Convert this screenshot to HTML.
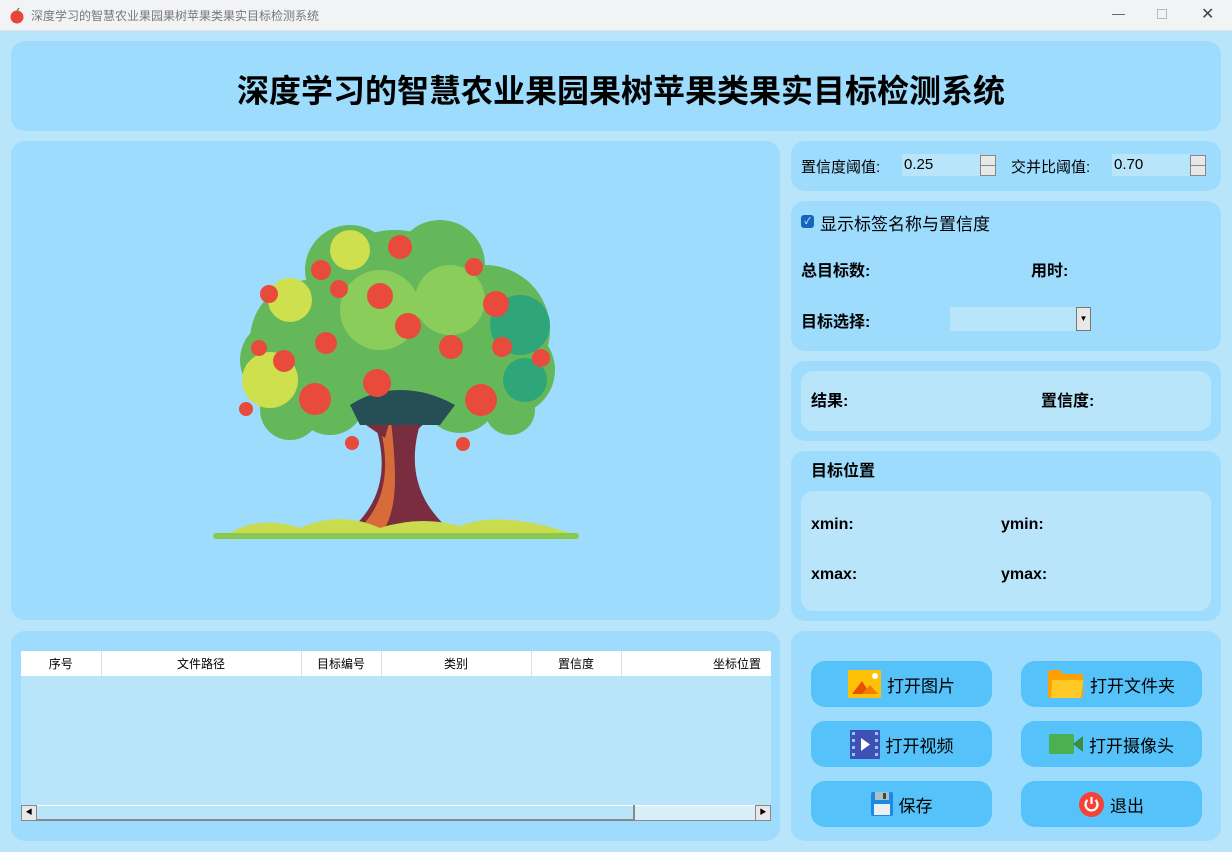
<!DOCTYPE html>
<html><head><meta charset="utf-8"><style>
*{margin:0;padding:0;box-sizing:border-box}
body{width:1232px;height:852px;overflow:hidden;background:#b9e5fb;font-family:"Liberation Sans","Noto Sans CJK SC",sans-serif;position:relative;color:#000}
.abs{position:absolute}
.tb{left:0;top:0;width:1232px;height:31px;background:#f2f3f5;border-bottom:1px solid #e2e6ea}
.p{position:absolute;background:#9ddcfc;border-radius:14px}
.in{position:absolute;background:#b9e5fb;border-radius:12px}
.b{font-weight:bold;font-size:16px}
.btn{position:absolute;width:181px;height:46px;background:#55c2f9;border-radius:14px;display:flex;align-items:center;justify-content:center;font-size:17px;gap:6px}
.spin{position:absolute;width:16px;height:21px;background:#e8e8e8;border:1px solid #888}
.spin:after{content:"";position:absolute;left:0;right:0;top:9px;border-top:1px solid #888}
th{font-weight:normal;font-size:12px;height:25px;border-right:1px solid #dde;background:#fff}
</style></head><body>
<div class="abs tb">
 <svg class="abs" style="left:9px;top:7px" width="16" height="17"><circle cx="8" cy="10" r="6.5" fill="#e8453c"/><path d="M8 4 L10 1" stroke="#4a4" stroke-width="1.5"/></svg>
 <div class="abs" style="left:31px;top:7px;font-size:12px;color:#777">深度学习的智慧农业果园果树苹果类果实目标检测系统</div>
 <div class="abs" style="left:1112px;top:6px;font-size:13px;color:#555">—</div>
 <div class="abs" style="left:1157px;top:9px;width:10px;height:10px;border:1px solid #bbb"></div>
 <div class="abs" style="left:1201px;top:4px;font-size:16px;color:#444">✕</div>
</div>
<div class="p" style="left:11px;top:41px;width:1210px;height:90px"></div>
<div class="abs" style="left:0;top:66px;width:1242px;text-align:center;font-size:32px;font-weight:bold">深度学习的智慧农业果园果树苹果类果实目标检测系统</div>

<div class="p" style="left:11px;top:141px;width:769px;height:479px"></div>
<svg class="abs" style="left:200px;top:210px" width="390" height="340" viewBox="0 0 390 340">
 <path d="M170 200 C190 250 185 290 150 320 L250 320 C215 290 205 250 225 200 Z" fill="#7a2d3e"/>
 <path d="M175 200 C192 250 188 290 160 318 L185 318 C200 290 195 250 190 200Z" fill="#d86b3a"/>
 <path d="M200 210 L260 160 L270 170 L212 225Z M190 210 L120 170 L115 180 L185 228Z" fill="#7a2d3e"/>
 <g fill="#64b85a">
  <circle cx="195" cy="110" r="90"/><circle cx="110" cy="130" r="60"/><circle cx="285" cy="120" r="65"/>
  <circle cx="80" cy="150" r="40"/><circle cx="310" cy="160" r="45"/><circle cx="150" cy="60" r="45"/><circle cx="240" cy="55" r="45"/>
  <circle cx="130" cy="190" r="35"/><circle cx="260" cy="185" r="38"/><circle cx="90" cy="200" r="30"/><circle cx="310" cy="200" r="25"/>
 </g>
 <g fill="#cfe04e"><circle cx="70" cy="170" r="28"/><circle cx="150" cy="40" r="20"/><circle cx="90" cy="90" r="22"/></g>
 <g fill="#2fa57a"><circle cx="320" cy="115" r="30"/><circle cx="325" cy="170" r="22"/></g>
 <g fill="#8acd5a"><circle cx="180" cy="100" r="40"/><circle cx="250" cy="90" r="35"/></g>
 <path d="M150 195 C180 175 220 175 255 195 L240 215 L160 215Z" fill="#264f55"/>
 <g fill="#e84b3c">
  <circle cx="200" cy="37" r="12"/><circle cx="121" cy="60" r="10"/><circle cx="274" cy="57" r="9"/><circle cx="69" cy="84" r="9"/>
  <circle cx="139" cy="79" r="9"/><circle cx="180" cy="86" r="13"/><circle cx="296" cy="94" r="13"/><circle cx="208" cy="116" r="13"/>
  <circle cx="126" cy="133" r="11"/><circle cx="251" cy="137" r="12"/><circle cx="59" cy="138" r="8"/><circle cx="84" cy="151" r="11"/>
  <circle cx="302" cy="137" r="10"/><circle cx="341" cy="148" r="9"/><circle cx="177" cy="173" r="14"/><circle cx="115" cy="189" r="16"/>
  <circle cx="281" cy="190" r="16"/><circle cx="46" cy="199" r="7"/><circle cx="152" cy="233" r="7"/><circle cx="263" cy="234" r="7"/>
 </g>
 <rect x="13" y="323" width="366" height="6" rx="3" fill="#8ac850"/>
 <path d="M30 323 Q60 305 100 318 Q140 300 180 318 Q220 305 260 316 Q300 300 370 323Z" fill="#c9dc50"/>
</svg>

<div class="p" style="left:791px;top:141px;width:430px;height:50px"></div>
<div class="abs" style="left:801px;top:156px;font-size:15px">置信度阈值:</div>
<div class="abs" style="left:902px;top:154px;width:78px;height:22px;background:#b9e5fb;font-size:15px;padding:2px 2px">0.25</div>
<div class="spin" style="left:980px;top:155px"></div>
<div class="abs" style="left:1011px;top:156px;font-size:15px">交并比阈值:</div>
<div class="abs" style="left:1112px;top:154px;width:78px;height:22px;background:#b9e5fb;font-size:15px;padding:2px 2px">0.70</div>
<div class="spin" style="left:1190px;top:155px"></div>

<div class="p" style="left:791px;top:201px;width:430px;height:150px"></div>
<div class="abs" style="left:801px;top:215px;width:13px;height:13px;background:#1565c0;border-radius:3px;color:#fff;font-size:9px;text-align:center;line-height:13px">✓</div>
<div class="abs" style="left:820px;top:210px;font-size:17px">显示标签名称与置信度</div>
<div class="abs b" style="left:801px;top:257px">总目标数:</div>
<div class="abs b" style="left:1031px;top:257px">用时:</div>
<div class="abs b" style="left:801px;top:308px">目标选择:</div>
<div class="abs" style="left:950px;top:307px;width:126px;height:24px;background:#b9e5fb"></div>
<div class="abs" style="left:1076px;top:307px;width:15px;height:24px;background:#e8e8e8;border:1px solid #777;font-size:8px;text-align:center;line-height:22px">▼</div>

<div class="p" style="left:791px;top:361px;width:430px;height:80px"></div>
<div class="in" style="left:801px;top:371px;width:410px;height:60px"></div>
<div class="abs b" style="left:811px;top:387px">结果:</div>
<div class="abs b" style="left:1041px;top:387px">置信度:</div>

<div class="p" style="left:791px;top:451px;width:430px;height:170px"></div>
<div class="abs b" style="left:811px;top:457px">目标位置</div>
<div class="in" style="left:801px;top:491px;width:410px;height:120px"></div>
<div class="abs b" style="left:811px;top:516px">xmin:</div>
<div class="abs b" style="left:1001px;top:516px">ymin:</div>
<div class="abs b" style="left:811px;top:566px">xmax:</div>
<div class="abs b" style="left:1001px;top:566px">ymax:</div>

<div class="p" style="left:11px;top:631px;width:769px;height:210px"></div>
<div class="abs" style="left:21px;top:651px;width:750px;height:170px;background:#b9e5fb;overflow:hidden">
 <table style="border-collapse:collapse;width:750px;table-layout:fixed"><tr>
 <th style="width:80px">序号</th><th style="width:200px">文件路径</th><th style="width:80px">目标编号</th><th style="width:150px">类别</th><th style="width:90px">置信度</th><th style="width:150px;text-align:right;padding-right:10px;border:0">坐标位置</th></tr></table>
 <div class="abs" style="left:0;top:154px;width:750px;height:16px;background:#b9e5fb;border-top:1px solid #fff;border-bottom:2px solid #888"></div>
 <div class="abs" style="left:0;top:154px;width:16px;height:16px;background:#e8e8e8;border:1px solid #888;font-size:7px;line-height:14px;text-align:center">◀</div>
 <div class="abs" style="left:16px;top:154px;width:598px;height:16px;border-right:2px solid #888"></div>
 <div class="abs" style="left:614px;top:155px;width:120px;height:14px;background:#d9eef8"></div>
 <div class="abs" style="left:734px;top:154px;width:16px;height:16px;background:#e8e8e8;border:1px solid #888;font-size:7px;line-height:14px;text-align:center">▶</div>
</div>

<div class="p" style="left:791px;top:631px;width:430px;height:210px"></div>
<div class="btn" style="left:811px;top:661px"><svg width="33" height="28"><rect width="33" height="28" rx="2" fill="#ffc107"/><path d="M4 24 L14 11 L22 24Z" fill="#e65100"/><path d="M14 24 L22 15 L30 24Z" fill="#f57c00"/><circle cx="27" cy="6" r="3" fill="#fff"/></svg>打开图片</div>
<div class="btn" style="left:1021px;top:661px"><svg width="36" height="28"><path d="M0 3 Q0 0 3 0 H12 L15 4 H33 Q35 4 35 7 V25 Q35 28 32 28 H3 Q0 28 0 25Z" fill="#ffa000"/><path d="M4 10 H33 Q36 10 35 13 L33 26 Q33 28 30 28 H3Z" fill="#ffca28"/></svg>打开文件夹</div>
<div class="btn" style="left:811px;top:721px"><svg width="30" height="29"><rect width="30" height="29" fill="#3f51b5"/><g fill="#90caf9"><rect x="2" y="2" width="3" height="3"/><rect x="2" y="9" width="3" height="3"/><rect x="2" y="16" width="3" height="3"/><rect x="2" y="23" width="3" height="3"/><rect x="25" y="2" width="3" height="3"/><rect x="25" y="9" width="3" height="3"/><rect x="25" y="16" width="3" height="3"/><rect x="25" y="23" width="3" height="3"/></g><path d="M11 8 L20 14.5 L11 21Z" fill="#fff"/></svg>打开视频</div>
<div class="btn" style="left:1021px;top:721px"><svg width="34" height="20"><rect width="25" height="20" rx="2" fill="#4caf50"/><path d="M24 10 L34 2 V18Z" fill="#388e3c"/></svg>打开摄像头</div>
<div class="btn" style="left:811px;top:781px"><svg width="22" height="24"><rect width="22" height="24" rx="2" fill="#1e88e5"/><rect x="4" y="0" width="14" height="8" fill="#b0bec5"/><rect x="12" y="1" width="3" height="6" fill="#37474f"/><rect x="3" y="12" width="16" height="11" fill="#eceff1"/></svg>保存</div>
<div class="btn" style="left:1021px;top:781px"><svg width="25" height="25"><circle cx="12.5" cy="12.5" r="12.5" fill="#f44336"/><path d="M8.5 8 A6 6 0 1 0 16.5 8" stroke="#fff" stroke-width="2.2" fill="none"/><path d="M12.5 5 V12" stroke="#fff" stroke-width="2.2"/></svg>退出</div>
</body></html>
